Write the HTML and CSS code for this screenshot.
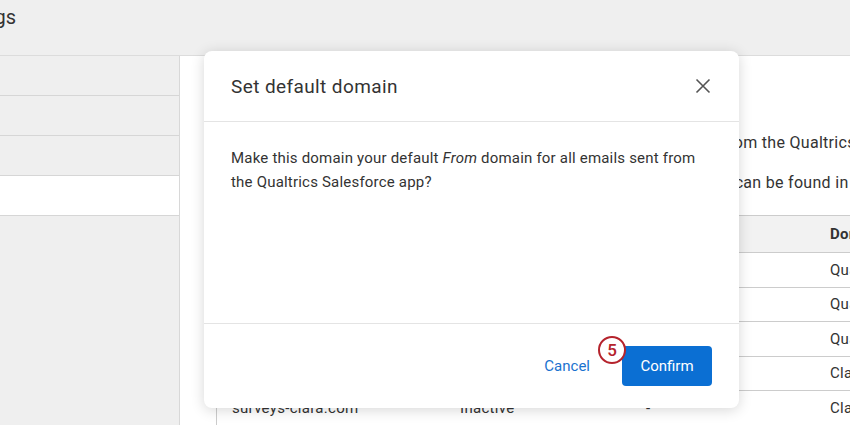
FILE: index.html
```html
<!DOCTYPE html>
<html lang="en">
<head>
    <meta charset="UTF-8">
    <title>Settings</title>
    <link rel="stylesheet" href="styles.css">
</head>
<body>
    <div class="page">
        <div class="top-bar">
            <h1 class="page-title">Settings</h1>
        </div>
        <div class="content">
            <ul class="side-nav">
                <li>General</li>
                <li>Users</li>
                <li>Permissions</li>
                <li class="active">Email domains</li>
                <li class="rest"></li>
            </ul>
            <div class="main">
                <p class="intro">Choose the domain that will be used for all emails that are sent from the Qualtrics Salesforce app.</p>
                <p class="intro">More information about how to set up your own custom domains can be found in our support pages.</p>
                <table class="domains">
                    <tr>
                        <th class="c-domain">Domain</th>
                        <th class="c-status">Status</th>
                        <th class="c-default">Default</th>
                        <th>Domain owner</th>
                    </tr>
                    <tr><td>qualtrics.com</td><td>Active</td><td>-</td><td>Qualtrics</td></tr>
                    <tr><td>email.qualtrics.com</td><td>Active</td><td>-</td><td>Qualtrics</td></tr>
                    <tr><td>surveys.qualtrics.com</td><td>Active</td><td>-</td><td>Qualtrics</td></tr>
                    <tr><td>clara.com</td><td>Active</td><td>-</td><td>Clara</td></tr>
                    <tr><td>surveys-clara.com</td><td>Inactive</td><td>-</td><td>Clara</td></tr>
                </table>
            </div>
        </div>

        <div class="modal">
            <div class="modal-head">
                <h2>Set default domain</h2>
                <svg class="close" width="16" height="16" viewBox="0 0 16 16">
                    <path d="M1.5 1.5 L14.5 14.5 M14.5 1.5 L1.5 14.5" stroke="#555" stroke-width="1.6" fill="none"/>
                </svg>
            </div>
            <div class="modal-body">
                Make this domain your default <em>From</em> domain for all emails sent from the Qualtrics Salesforce app?
            </div>
            <div class="modal-foot">
                <a class="btn-cancel" href="#">Cancel</a>
                <span class="btn-wrap">
                    <a class="btn-confirm" href="#">Confirm</a>
                    <span class="step">5</span>
                </span>
            </div>
        </div>
    </div>
</body>
</html>
```

FILE: styles.css
```css
body, h1, h2, p, ul, li {margin: 0; padding: 0;}
body {
    font-family: Roboto, "Liberation Sans", sans-serif;
    color: #333;
    background: #fff;
    overflow: hidden;
}
.page {
    position: relative;
    width: 850px;
    height: 425px;
    overflow: hidden;
}
.top-bar {
    height: 55px;
    background: #efefef;
    border-bottom: 1px solid #dcdcdc;
}
.page-title {
    font-size: 20px;
    font-weight: 400;
    line-height: 34px;
    margin-left: -57px;
    color: #333;
}
.content {
    display: flex;
    height: 369px;
}
.side-nav {
    list-style: none;
    width: 179px;
    flex-shrink: 0;
    border-right: 1px solid #d8d8d8;
    background: #efefef;
    display: flex;
    flex-direction: column;
    color: transparent;
    font-size: 14px;
}
.side-nav li {
    height: 39px;
    border-bottom: 1px solid #d6d6d6;
}
.side-nav li.active {background: #fff;}
.side-nav li.rest {flex: 1; border-bottom: none;}

.main {
    flex: 1;
    min-width: 0;
    overflow: hidden;
    padding: 0 0 0 36px;
    font-size: 15px;
    letter-spacing: 0.3px;
}
.intro {
    white-space: nowrap;
    line-height: 20px;
    font-size: 16px;
    margin: 20px 0 0 36px;
}
.intro:first-child {margin-top: 77px;}
.domains {
    margin-top: 22px;
    border-collapse: collapse;
    table-layout: fixed;
    width: 800px;
    border-left: 1px solid #ccc;
}
.domains th, .domains td {
    text-align: left;
    padding: 0 0 0 15px;
    border-bottom: 1px solid #ccc;
    white-space: nowrap;
    overflow: hidden;
}
.domains th {
    background: #f2f2f2;
    height: 36px;
    border-top: 1px solid #ccc;
    font-weight: 700;
}
.domains td {height: 33.5px;}
.c-domain {width: 213px;}
.c-status {width: 171px;}
.c-default {width: 169px;}

.modal {
    position: absolute;
    left: 204px;
    top: 51px;
    width: 535px;
    height: 357px;
    background: #fff;
    border-radius: 8px;
    box-shadow: 0 2px 14px rgba(0, 0, 0, 0.16);
    display: flex;
    flex-direction: column;
}
.modal-head {
    height: 70px;
    border-bottom: 1px solid #e4e4e4;
    display: flex;
    align-items: center;
    justify-content: space-between;
    padding: 0 28px 0 27px;
}
.modal-head h2 {
    font-size: 19px;
    font-weight: 400;
    letter-spacing: 0.4px;
    color: #333;
}
.modal-body {
    flex: 1;
    padding: 24px 27px 0 27px;
    font-size: 15px;
    line-height: 24px;
    letter-spacing: 0.2px;
    color: #333;
}
.modal-foot {
    height: 84px;
    border-top: 1px solid #e4e4e4;
    display: flex;
    align-items: center;
    justify-content: flex-end;
    padding: 0 27px;
    gap: 32px;
}
.btn-cancel {
    color: #1a72cf;
    text-decoration: none;
    font-size: 15px;
}
.btn-wrap {position: relative;}
.btn-confirm {
    display: block;
    width: 90px;
    height: 40px;
    line-height: 40px;
    text-align: center;
    background: #0b6fd3;
    color: #fff;
    border-radius: 4px;
    text-decoration: none;
    font-size: 15px;
}
.step {
    position: absolute;
    left: -24px;
    top: -10px;
    width: 24px;
    height: 24px;
    border: 2px solid #b5232c;
    border-radius: 50%;
    background: #fff;
    color: #b5232c;
    font-size: 17px;
    font-weight: 500;
    line-height: 24px;
    text-align: center;
}
```
